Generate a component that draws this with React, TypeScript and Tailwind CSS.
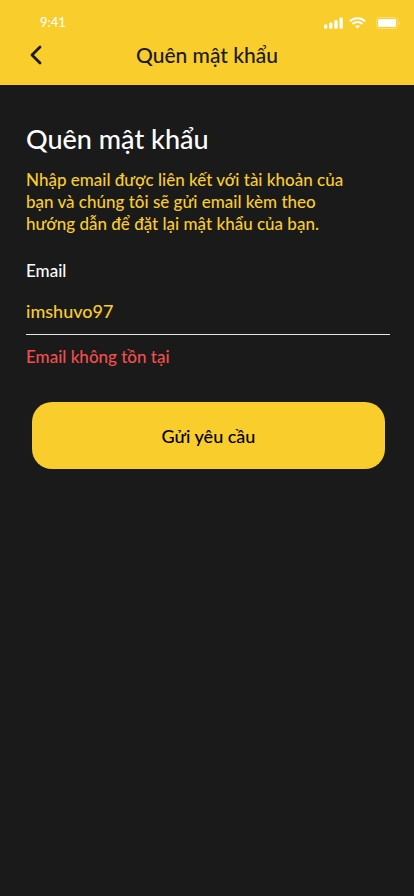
import { useState } from "react";

function StatusIcons() {
  return (
    <div className="flex items-center text-white">
      <svg width="19" height="12" viewBox="0 0 19 12" fill="currentColor" aria-hidden="true">
        <rect x="0" y="7.5" width="3.3" height="4.2" rx="1" />
        <rect x="5.2" y="5.5" width="3.3" height="6.2" rx="1" />
        <rect x="10.3" y="3" width="3.3" height="8.7" rx="1" />
        <rect x="15.5" y="0.5" width="3.3" height="11.2" rx="1" />
      </svg>
      <svg className="ml-1.5" width="17" height="12" viewBox="0 0 17 12" fill="none" stroke="currentColor" strokeWidth="2" aria-hidden="true">
        <path d="M0.8 4.3C5.1 0.2 11.9 0.2 16.2 4.3" />
        <path d="M3.5 7C6.3 4.4 10.7 4.4 13.5 7" />
        <path d="M6 9.1Q8.5 7.3 11 9.1L8.5 11.5Z" fill="currentColor" stroke="none" />
      </svg>
      <svg className="ml-2.5" width="24" height="12" viewBox="0 0 24 12" aria-hidden="true">
        <rect x="0.5" y="0.5" width="21" height="11" rx="2.7" fill="none" stroke="currentColor" opacity="0.35" />
        <rect x="2" y="2" width="18" height="8" rx="1.3" fill="currentColor" />
        <path d="M22.7 4v4c.8-.3 1.3-1.1 1.3-2S23.500 4.300 22.700 4Z" fill="currentColor" opacity="0.4" />
      </svg>
    </div>
  );
}

export default function App() {
  const [email, setEmail] = useState("imshuvo97");

  return (
    <div className="min-h-screen bg-[#1a1a1a] font-['Lato','Noto_Sans',sans-serif] font-medium">
      <header className="bg-[#f9cd2c] pb-4">
        <div className="flex h-[41px] items-center justify-between pt-1 pr-3.5 pl-10">
          <time className="text-[13px] text-white">9:41</time>
          <StatusIcons />
        </div>
        <div className="grid grid-cols-[1fr_auto_1fr] items-center">
          <button type="button" aria-label="Quay lại" className="ml-6 flex size-6 items-center justify-center text-[#1a1a1a]">
            <svg width="12" height="20" viewBox="0 0 12 20" fill="none" stroke="currentColor" strokeWidth="2.8" strokeLinecap="round" strokeLinejoin="round" aria-hidden="true">
              <path d="M10 2L2 10L10 18" />
            </svg>
          </button>
          <span className="text-[21px] leading-7 text-[#1a1a1a]">Quên mật khẩu</span>
        </div>
      </header>

      <main className="px-6.5 pt-9">
        <h1 className="text-[27px] leading-9 font-medium text-white">Quên mật khẩu</h1>
        <p className="mt-3 max-w-80 text-[17px] leading-[22px] text-[#f9cd2c]">
          Nhập email được liên kết với tài khoản của bạn và chúng tôi sẽ gửi email kèm theo hướng dẫn để đặt lại mật khẩu của bạn.
        </p>
        <form className="mt-6" onSubmit={(event) => event.preventDefault()}>
          <div className="-mr-0.5">
            <label htmlFor="email" className="block text-[17px] leading-6 text-white">Email</label>
            <input
              id="email"
              type="text"
              value={email}
              onChange={(event) => setEmail(event.target.value)}
              aria-invalid="true"
              aria-describedby="email-error"
              className="mt-2 block h-11 w-full border-b border-[#e5e5e5] bg-transparent pb-1 text-lg text-[#f9cd2c] outline-none"
            />
            <p id="email-error" className="mt-2.5 text-[17px] leading-6 text-[#f44e4e]">Email không tồn tại</p>
          </div>
          <div className="mt-[33px] pr-[3px] pl-1.5">
            <button type="submit" className="h-[67px] w-full rounded-[20px] bg-[#f9cd2c] text-lg text-black">Gửi yêu cầu</button>
          </div>
        </form>
      </main>
    </div>
  );
}
